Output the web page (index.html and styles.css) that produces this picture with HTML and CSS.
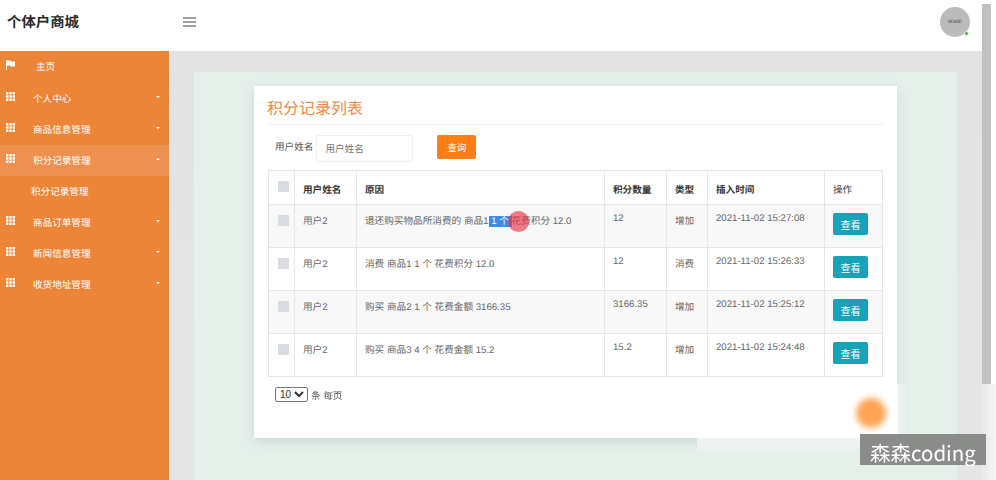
FILE: index.html
```html
<!DOCTYPE html>
<html>
<head>
    <meta charset="UTF-8">
    <title>积分记录列表</title>
    <link rel="stylesheet" href="styles.css">
</head>
<body>
    <svg class="defs" width="0" height="0">
        <symbol id="grid" viewBox="0 0 9 9">
            <path d="M0 0h2.4v2.4H0zM3.3 0h2.4v2.4H3.3zM6.6 0H9v2.4H6.6zM0 3.3h2.4v2.4H0zM3.3 3.3h2.4v2.4H3.3zM6.6 3.3H9v2.4H6.6zM0 6.6h2.4V9H0zM3.3 6.6h2.4V9H3.3zM6.6 6.6H9V9H6.6z" fill="#fff"/>
        </symbol>
    </svg>
    <div class="page">
        <div class="content">
            <header class="topbar">
                <div class="brand">个体户商城</div>
                <div class="burger"><span></span><span></span><span></span></div>
                <div class="avatar">80x80<i class="online"></i></div>
            </header>
            <div class="below">
                <ul class="sidebar">
                    <li class="home">
                        <svg class="icon" viewBox="0 0 9 10"><path d="M0 0h1v10H0zM1 .5h3.5l1 1H9v5H5l-1-1H1z" fill="#fff"/></svg>
                        <span>主页</span>
                    </li>
                    <li><svg class="icon"><use href="#grid"/></svg><span>个人中心</span><b class="caret"></b></li>
                    <li><svg class="icon"><use href="#grid"/></svg><span>商品信息管理</span><b class="caret"></b></li>
                    <li class="active"><svg class="icon"><use href="#grid"/></svg><span>积分记录管理</span><b class="caret up"></b></li>
                    <li class="sub"><span>积分记录管理</span></li>
                    <li><svg class="icon"><use href="#grid"/></svg><span>商品订单管理</span><b class="caret"></b></li>
                    <li><svg class="icon"><use href="#grid"/></svg><span>新闻信息管理</span><b class="caret"></b></li>
                    <li><svg class="icon"><use href="#grid"/></svg><span>收货地址管理</span><b class="caret"></b></li>
                </ul>
                <main class="main">
                    <div class="panel">
                        <div class="card">
                            <h1>积分记录列表</h1>
                            <form class="search">
                                <label>用户姓名</label>
                                <input type="text" placeholder="用户姓名">
                                <button type="button">查询</button>
                            </form>
                            <table class="records">
                                <colgroup>
                                    <col class="c-check"><col class="c-user"><col class="c-reason"><col class="c-num"><col class="c-type"><col class="c-time"><col>
                                </colgroup>
                                <thead>
                                    <tr>
                                        <th><i class="check"></i></th>
                                        <th>用户姓名</th>
                                        <th>原因</th>
                                        <th>积分数量</th>
                                        <th>类型</th>
                                        <th>插入时间</th>
                                        <th class="light">操作</th>
                                    </tr>
                                </thead>
                                <tbody>
                                    <tr>
                                        <td><i class="check"></i></td>
                                        <td>用户2</td>
                                        <td>退还购买物品所消费的 商品1<span class="picked"> 1 个 </span>花费积分 12.0</td>
                                        <td>12</td>
                                        <td>增加</td>
                                        <td>2021-11-02 15:27:08</td>
                                        <td><button type="button" class="view">查看</button></td>
                                    </tr>
                                    <tr>
                                        <td><i class="check"></i></td>
                                        <td>用户2</td>
                                        <td>消费 商品1 1 个 花费积分 12.0</td>
                                        <td>12</td>
                                        <td>消费</td>
                                        <td>2021-11-02 15:26:33</td>
                                        <td><button type="button" class="view">查看</button></td>
                                    </tr>
                                    <tr>
                                        <td><i class="check"></i></td>
                                        <td>用户2</td>
                                        <td>购买 商品2 1 个 花费金额 3166.35</td>
                                        <td>3166.35</td>
                                        <td>增加</td>
                                        <td>2021-11-02 15:25:12</td>
                                        <td><button type="button" class="view">查看</button></td>
                                    </tr>
                                    <tr>
                                        <td><i class="check"></i></td>
                                        <td>用户2</td>
                                        <td>购买 商品3 4 个 花费金额 15.2</td>
                                        <td>15.2</td>
                                        <td>增加</td>
                                        <td>2021-11-02 15:24:48</td>
                                        <td><button type="button" class="view">查看</button></td>
                                    </tr>
                                </tbody>
                            </table>
                            <div class="pager">
                                <select><option>10</option></select>
                                <span>条 每页</span>
                            </div>
                        </div>
                    </div>
                </main>
            </div>
        </div>
        <div class="scrollbar">
            <div class="thumb"></div>
            <div class="scroll-rest"></div>
        </div>
    </div>

    <!-- 录屏叠加层 -->
    <div class="pointer"></div>
    <div class="veil"></div>
    <div class="glow"></div>
    <div class="mark">森森coding</div>
</body>
</html>
```

FILE: styles.css
```css
* {
    box-sizing: border-box;
}

html, body {
    margin: 0;
    padding: 0;
    height: 480px;
    overflow: hidden;
}

body {
    position: relative;
    background: #fff;
    font-family: "Liberation Sans", "Noto Sans CJK SC", sans-serif;
    font-size: 9.6px;
    color: #555;
    text-rendering: geometricPrecision;
}

.defs {
    position: absolute;
}

.page {
    display: flex;
    height: 480px;
    filter: blur(0.3px);
}

.content {
    width: 982px;
    display: flex;
    flex-direction: column;
}

/* 滚动条 */
.scrollbar {
    width: 14px;
    padding-top: 4px;
    background: #fff;
}

.thumb {
    width: 9px;
    height: 380px;
    background: #c1c1c1;
}

.scroll-rest {
    height: 96px;
    background: linear-gradient(90deg, #e8e8e8, #f6f6f6);
}

/* 顶部 */
.topbar {
    height: 51px;
    flex: none;
    display: flex;
    align-items: center;
    background: #fff;
    padding-right: 12px;
}

.brand {
    width: 183px;
    padding: 0 0 9px 7px;
    font-size: 14.4px;
    font-weight: bold;
    color: #2b2b2b;
}

.burger {
    width: 13px;
    margin-bottom: 7px;
    display: flex;
    flex-direction: column;
    gap: 2px;
}

.burger span {
    display: block;
    height: 2px;
    background: #a0a0a0;
}

.avatar {
    position: relative;
    width: 30px;
    height: 30px;
    margin: 0 0 7px auto;
    border-radius: 50%;
    background: #bbb;
    color: #444;
    font-size: 5px;
    line-height: 30px;
    text-align: center;
}

.online {
    position: absolute;
    right: 1px;
    bottom: 1px;
    width: 5px;
    height: 5px;
    border-radius: 50%;
    background: #5cab5c;
    border: 1px solid #eee;
}

.below {
    flex: 1;
    display: flex;
    min-height: 0;
}

/* 侧边栏 */
.sidebar {
    width: 169px;
    flex: none;
    margin: 0;
    padding: 0;
    list-style: none;
    background: #ec8538;
    color: #fff;
}

.sidebar li {
    display: flex;
    align-items: center;
    height: 31px;
    padding: 0 9px 0 6px;
}

.sidebar li span {
    margin-bottom: 2px;
}

.sidebar .icon {
    width: 9px;
    height: 9px;
    margin: -4px 18px 0 0;
    flex: none;
}

.sidebar .home {
    height: 32px;
}

.sidebar .home .icon {
    height: 10px;
    margin-right: 21px;
}

.sidebar .active {
    background: #ee9150;
}

.sidebar .sub {
    padding-left: 31px;
}

.caret {
    margin: -3px 0 0 auto;
    border-left: 2.5px solid transparent;
    border-right: 2.5px solid transparent;
    border-top: 2.5px solid #fff;
}

.caret.up {
    border-top: 0;
    border-bottom: 2.5px solid #fff;
}

/* 主区域 */
.main {
    flex: 1;
    padding: 21px 25px 0;
    background: linear-gradient(#e3e3e3, #e6e6e6);
}

.panel {
    height: 100%;
    padding: 14px 60px 0;
    background: #e6f0eb;
}

.card {
    height: 352px;
    padding: 11px 13px 0 14px;
    background: #fff;
    box-shadow: 0 3px 10px rgba(120, 140, 150, 0.25);
}

h1 {
    margin: 0 0 10px;
    height: 28px;
    line-height: 26px;
    font-size: 16px;
    font-weight: normal;
    color: #ef8b46;
    border-bottom: 1px solid #f3f3f3;
    text-indent: -1px;
}

.search {
    display: flex;
    align-items: flex-start;
    height: 35px;
    padding-left: 7px;
}

.search label {
    line-height: 25px;
    margin-right: 3px;
}

.search input {
    width: 97px;
    height: 27px;
    padding: 0 8px;
    border: 1px solid #f0f0f0;
    border-radius: 2px;
    font: inherit;
    color: #555;
}

.search input::placeholder {
    color: #777;
}

.search button {
    width: 39px;
    height: 24px;
    margin-left: 24px;
    border: 0;
    border-radius: 2px;
    background: #fd7e14;
    color: #fff;
    font: inherit;
}

.records {
    width: 615px;
    table-layout: fixed;
    border-collapse: collapse;
    border: 1px solid #e6e6e9;
}

.c-check { width: 26px; }
.c-user { width: 62px; }
.c-reason { width: 248px; }
.c-num { width: 62px; }
.c-type { width: 41px; }
.c-time { width: 117px; }

.records th, .records td {
    border: 1px solid #e6e6e9;
    padding: 0 8px;
    vertical-align: top;
    text-align: left;
    white-space: nowrap;
}

.records th {
    height: 34px;
    padding-top: 11px;
    font-weight: bold;
    color: #333;
}

.records th.light {
    font-weight: normal;
    color: #444;
}

.records td {
    height: 43px;
    padding-top: 8px;
    color: #666;
    font-size: 9.65px;
}

.records tbody tr:nth-child(odd) {
    background: #f8f8f9;
}

.records th:first-child, .records td:first-child {
    padding: 10px 0 0 9px;
}

.check {
    display: block;
    width: 11px;
    height: 11px;
    background: #d9dce1;
}

.picked {
    background: #3a8ee6;
    color: #fff;
    white-space: pre;
}

.view {
    display: block;
    width: 35px;
    height: 22px;
    padding: 0;
    border: 0;
    border-radius: 2px;
    background: #17a2b8;
    color: #fff;
    font: inherit;
    font-size: 10px;
}

.pager {
    display: flex;
    align-items: center;
    gap: 3px;
    margin-top: 10px;
    padding-left: 7px;
}

.pager select {
    width: 33px;
    height: 15px;
    padding: 0;
    font: inherit;
    font-size: 10px;
    color: #333;
    background: #fff;
    border: 1px solid #777;
    border-radius: 2px;
}

/* 录屏叠加层 */
.pointer {
    position: absolute;
    left: 508px;
    top: 211px;
    width: 21px;
    height: 21px;
    border-radius: 50%;
    background: rgba(232, 50, 70, 0.65);
}

.veil {
    position: absolute;
    left: 697px;
    top: 384px;
    width: 263px;
    height: 96px;
    background: linear-gradient(90deg, #fff 0, #fff 74%, rgba(255, 255, 255, 0) 80%);
    -webkit-mask-image: linear-gradient(#000 48%, transparent 74%);
    mask-image: linear-gradient(#000 48%, transparent 74%);
}

.glow {
    position: absolute;
    left: 856px;
    top: 398px;
    width: 30px;
    height: 30px;
    border-radius: 50%;
    background: #ffa453;
    filter: blur(3px);
}

.mark {
    position: absolute;
    left: 860px;
    top: 434px;
    width: 126px;
    height: 31px;
    padding-left: 10px;
    background: #8a8c89;
    color: #fff;
    font-family: "Noto Sans CJK SC", sans-serif;
    font-size: 20.5px;
    line-height: 37px;
}
```
